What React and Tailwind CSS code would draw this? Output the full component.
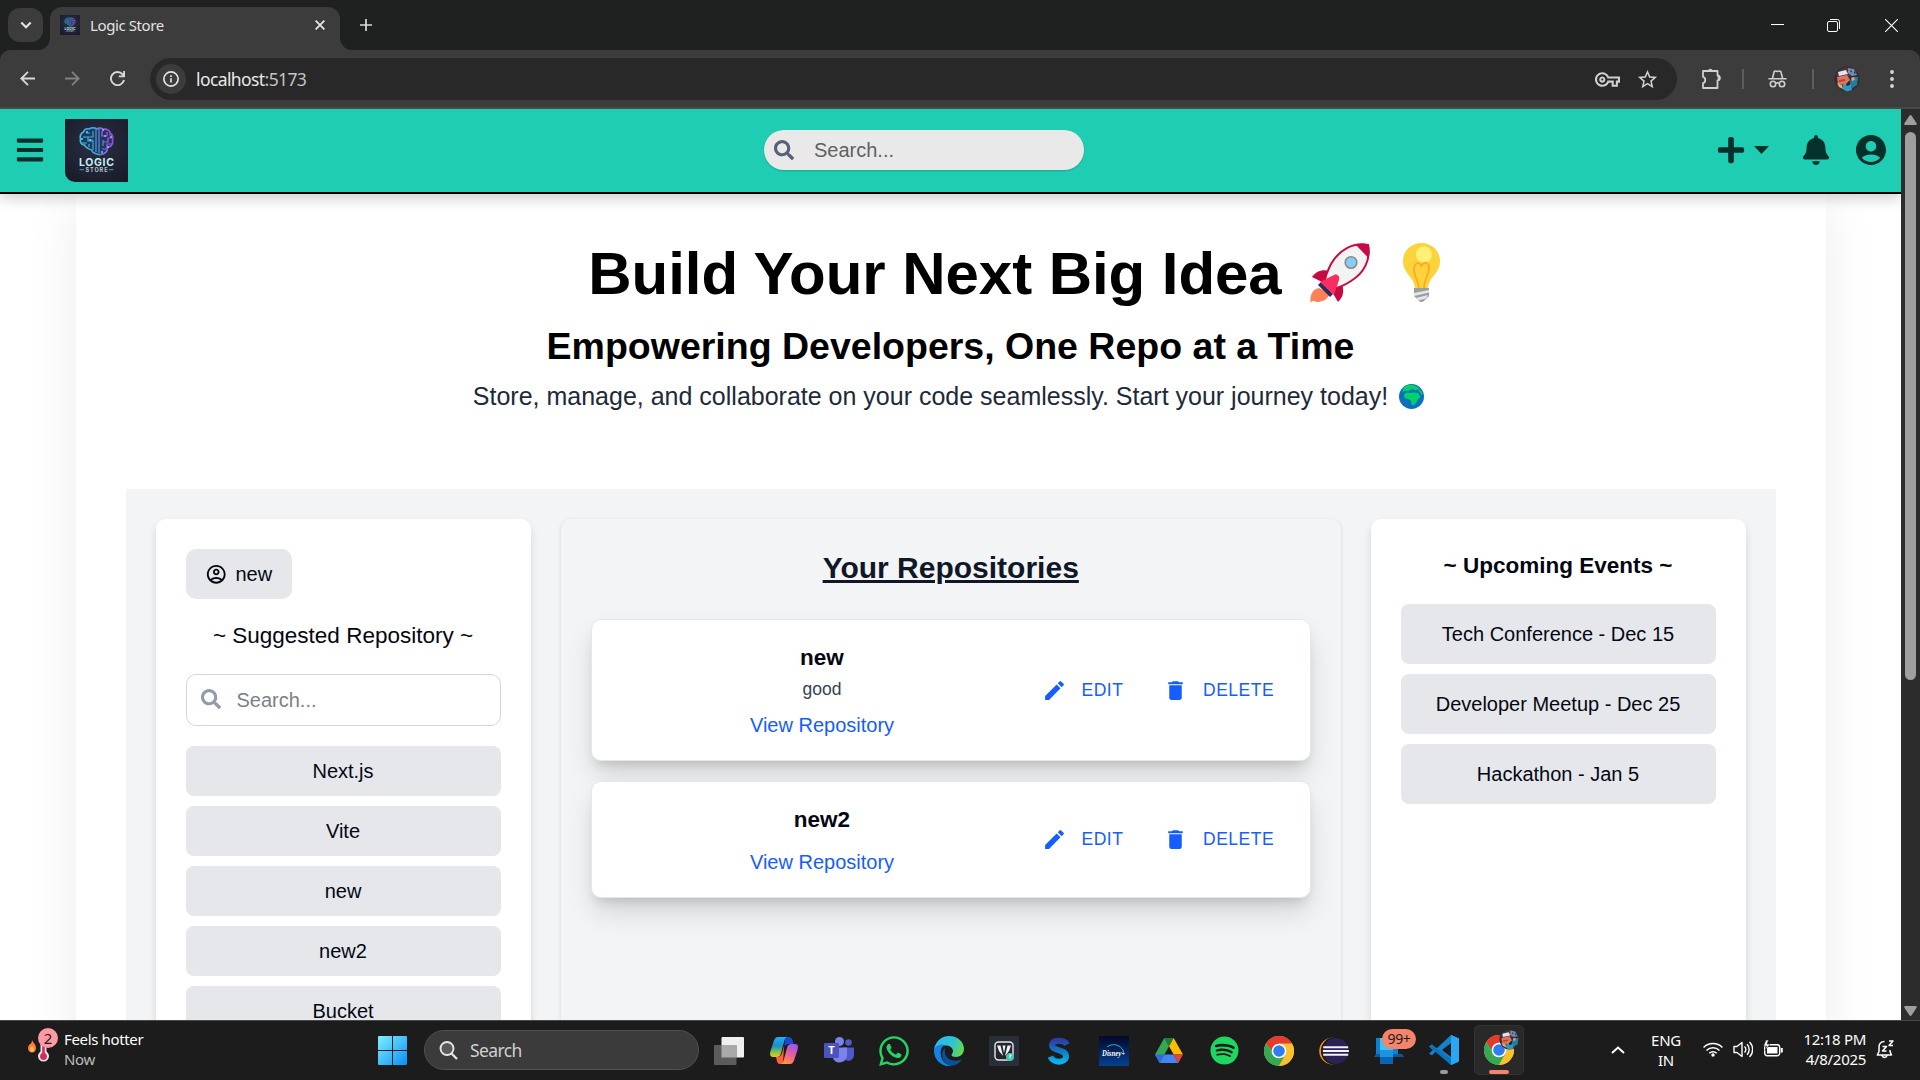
import React from "react";
import { FaBars, FaPlus, FaBell, FaSearch, FaSpotify, FaWhatsapp } from "react-icons/fa";
import { MdEdit, MdDelete, MdOutlineVpnKey, MdStarBorder } from "react-icons/md";

const UI = "font-['Noto_Sans','Open_Sans',sans-serif]";

/* ---------- shared drawings ---------- */

function StoreLogo({ id, className }) {
  return (
    <svg viewBox="0 0 63 63" className={className}>
      <defs>
        <linearGradient id={id + "b"} x1="14" x2="50" y1="22" y2="18" gradientUnits="userSpaceOnUse">
          <stop offset="0" stopColor="#45c4e0" />
          <stop offset="0.5" stopColor="#4a98d8" />
          <stop offset="0.75" stopColor="#b353f0" />
          <stop offset="1" stopColor="#8a4fd0" />
        </linearGradient>
        <radialGradient id={id + "g"} cx="0.5" cy="0.4" r="0.8">
          <stop offset="0" stopColor="#2a3044" />
          <stop offset="1" stopColor="#161826" />
        </radialGradient>
      </defs>
      <rect width="63" height="63" fill={"url(#" + id + "g)"} />
      <path
        d="M32 10c-3-2-7-1-8 0-3-1-5 1-5.500 3-3 1-4 5-3 7-1 3 1 6 4 6 1 3 5 4 7 5 1 3 6 5 9 4.500 4-.5 7-3 7-7 4-1 6-4 5-7 1-3 0-6-2-7-1-4-5-5-7-4-2-2-5-2-6.500-.5z"
        fill="#1b3a5c"
        stroke={"url(#" + id + "b)"}
        strokeWidth="1.6"
      />
      <g fill="none" stroke={"url(#" + id + "b)"} strokeWidth="1.2">
        <path d="M31 10v23M34 10v24M28 12v6h-5M18 18h5v4h5v5M17 24h5M24 28v-3M28 21h-3M21 14h4M37 12v5h5v-4M47 19h-4v4h-5M38 27v-6M42 29v-4h5M37 30h4M44 16h3M28 31v-6" />
      </g>
      <g fill="#5fd8f0">
        <circle cx="22" cy="13" r="1" />
        <circle cx="17" cy="20" r="1" />
        <circle cx="25" cy="21" r="1" />
        <circle cx="37" cy="33" r="1" />
        <circle cx="43" cy="28" r="1" />
      </g>
      <g fill="#e08bff">
        <circle cx="38" cy="11" r="1.1" />
        <circle cx="46" cy="18" r="1.1" />
        <circle cx="40" cy="17" r="1" />
      </g>
      <text x="31.500" y="46.500" textAnchor="middle" fontSize="10.500" fontWeight="700" textLength="35" fill="#c5eef3" fontFamily="Inter, sans-serif">LOGIC</text>
      <text x="31.500" y="52.700" textAnchor="middle" fontSize="5.500" fontWeight="700" textLength="22" fill="#b9c6cf" fontFamily="Inter, sans-serif">STORE</text>
      <path d="M14.500 50.700h4.500M44 50.700h4.500" stroke="#2f8f98" strokeWidth="1.200" />
    </svg>
  );
}

function Avatar({ className }) {
  return (
    <svg viewBox="0 0 26 26" className={className}>
      <circle cx="13" cy="13" r="12.5" fill="#3a2a33" />
      <path d="M2 9c3-5 8-8 13-7l4 5-4 4H4z" fill="#57303a" />
      <path d="M3 11l10-2 3 5-4 5-8-1z" fill="#d9785c" />
      <path d="M4 6l8-2 2 4-9 2z" fill="#dfe6ee" />
      <path d="M14 2l6 1 3 6-5 1-4-3z" fill="#6f8fb8" />
      <path d="M16 4l2 1-1 2zM20 5l2 2-2 1z" fill="#3a2a33" />
      <path d="M18 11l6 0-1 8-5 3-2-6z" fill="#1d7fa3" />
      <path d="M9 19l8-1 1 6-5 1.500-4-2z" fill="#2a9cc4" />
      <path d="M3 17l5 2 1 4-4-2z" fill="#e0b27c" />
      <path d="M17 12l3-1 1 3-3 1z" fill="#e79a7a" />
      <path d="M5 14l6-1v2l-6 1z" fill="#b8432f" />
      <path d="M12 18l3-3 1 4-3 1z" fill="#2b2530" />
    </svg>
  );
}

function ChromeLogo({ className }) {
  return (
    <svg viewBox="0 0 30 30" className={className}>
      <circle cx="15" cy="15" r="15" fill="#fbc02d" />
      <path d="M2 7.500A15 15 0 0 0 15 30l6.500-11.250L15 15l-6.500 3.750z" fill="#34a853" />
      <path d="M15 7.500h13A15 15 0 0 1 15 30l6.500-11.250z" fill="#fbc02d" />
      <path d="M2 7.500L8.500 18.750 15 15 15 7.500z" fill="#34a853" />
      <path d="M2 7.500A15 15 0 0 1 28 7.500H15l-6.500 3.750L8.500 15 2.200 7.300z" fill="#e33b2e" />
      <circle cx="15" cy="15" r="7.300" fill="#fff" />
      <circle cx="15" cy="15" r="5.800" fill="#2f7df0" />
    </svg>
  );
}

/* ---------- browser chrome ---------- */

function TabStrip() {
  return (
    <div className="flex h-[50px] bg-[#1f2120] pl-2">
      <div className="mt-2 flex h-[34px] w-[35px] items-center justify-center rounded-[12px] bg-[#3c3c3c]">
        <svg viewBox="0 0 12 8" className="h-2 w-3" fill="none" stroke="#e3e3e3" strokeWidth="2.200">
          <path d="M1.300 1.500L6 6.200l4.700-4.700" />
        </svg>
      </div>
      <div className="mt-[7px] flex h-[43px] items-start">
        <div className="flex h-[43px] w-[7px] items-end justify-end">
          <svg viewBox="0 0 12 12" className="-ml-3 h-3 w-3 shrink-0">
            <path d="M12 0v12H0A12 12 0 0 0 12 0z" fill="#3c3c3c" />
          </svg>
        </div>
        <div className="flex h-[43px] w-[290px] items-start rounded-t-[12px] bg-[#3c3c3c] pl-[10px] pt-2">
          <StoreLogo id="fav" className="h-5 w-5" />
          <span className={"ml-[10px] h-5 w-[200px] text-[15px] leading-[20px] tracking-[-0.4px] text-[#e3e3e3] " + UI}>Logic Store</span>
          <svg viewBox="0 0 10 10" className="ml-[25px] mt-[5px] h-[10px] w-[10px]" stroke="#e3e3e3" strokeWidth="1.900">
            <path d="M.6.6l8.800 8.800M9.400.6L.6 9.400" />
          </svg>
        </div>
        <div className="flex h-[43px] items-end">
          <svg viewBox="0 0 12 12" className="h-3 w-3">
            <path d="M0 0v12h12A12 12 0 0 1 0 0z" fill="#3c3c3c" />
          </svg>
        </div>
      </div>
      <svg viewBox="0 0 12 12" className="ml-[8px] mt-[19px] h-3 w-3" stroke="#dcdcdc" strokeWidth="1.700">
        <path d="M6 0v12M0 6h12" />
      </svg>
      <div className="ml-auto mr-[22px] flex h-[50px] items-center gap-[44px]">
        <svg viewBox="0 0 13 13" className="h-[13px] w-[13px]" stroke="#fff" strokeWidth="1">
          <path d="M0 5.500h13" />
        </svg>
        <svg viewBox="0 0 13 13" className="-ml-px mr-px h-[13px] w-[13px]" fill="none" stroke="#fff" strokeWidth="1">
          <rect x=".5" y="2.500" width="10" height="10" rx="1.500" />
          <path d="M3 .5h7.500a2 2 0 0 1 2 2V10" />
        </svg>
        <svg viewBox="0 0 13 13" className="h-[13px] w-[13px]" stroke="#fff" strokeWidth="1.100">
          <path d="M0 0l13 13M13 0L0 13" />
        </svg>
      </div>
    </div>
  );
}

function Toolbar() {
  return (
    <div className="bg-[#1f2120]">
      <div className="flex h-[59px] items-start rounded-t-[10px] border-b-2 border-[#4a4a4b] bg-[#3c3c3c] pt-2">
        <div className="flex h-[42px] w-[150px] items-center gap-[30px] pb-px pl-5">
          <svg viewBox="0 0 15 15" className="h-[15px] w-[15px]" fill="none" stroke="#d8d8d8" strokeWidth="1.800">
            <path d="M15 7.500H1.500M8 .8L1.300 7.500 8 14.200" />
          </svg>
          <svg viewBox="0 0 15 15" className="h-[15px] w-[15px]" fill="none" stroke="#808080" strokeWidth="1.800">
            <path d="M0 7.500h13.500M7 .8l6.700 6.700L7 14.200" />
          </svg>
          <svg viewBox="0 0 15 15" className="h-[15px] w-[15px]" fill="none" stroke="#d8d8d8" strokeWidth="1.900">
            <path d="M14 9A6.600 6.600 0 1 1 12.600 3.300L14 5M14.100 0v5.400H8.800" />
          </svg>
        </div>
        <div className="flex h-[42px] w-[1527px] items-center rounded-full bg-[#282828] pl-[6px]">
          <div className="flex h-[30px] w-[30px] items-center justify-center rounded-full bg-[#3c3c3c]">
            <svg viewBox="0 0 16 16" className="h-4 w-4" fill="none" stroke="#e3e3e3" strokeWidth="1.700">
              <circle cx="8" cy="8" r="7.100" />
              <path d="M8 7.200v4.300M8 4.200v1.700" />
            </svg>
          </div>
          <span className={"ml-[10px] text-[17.5px] leading-[24px] tracking-[-0.6px] text-[#e8e8e8] " + UI}>
            localhost<span className="text-[#c4c4c4]">:5173</span>
          </span>
          <MdOutlineVpnKey size={25} color="#d0d0d0" className="ml-auto" />
          <MdStarBorder size={23} color="#d0d0d0" className="ml-[16px] mr-[18px]" />
        </div>
        <div className="flex h-[42px] flex-1 items-center pl-[24px]">
          <svg viewBox="0 0 21 21" className="-mt-px h-[21px] w-[21px]" fill="none" stroke="#d0d0d0" strokeWidth="1.800" strokeLinejoin="round">
            <path d="M2 3h14.500v4.500c3.200.3 3.200 4.700 0 5V20H2v-4.800c3-.8 3-5.600 0-6.400z" />
            <path d="M7 2.500a2.600 2.600 0 0 1 4.600 0zM17 7.800a2.600 2.600 0 0 1 0 4.500z" fill="#d0d0d0" strokeWidth="0.500" />
          </svg>
          <div className="ml-[20px] h-5 w-[2px] bg-[#5e5e5e]" />
          <svg viewBox="0 0 19 18" className="ml-[24px] h-[18px] w-[19px]" fill="none" stroke="#d0d0d0" strokeWidth="1.600">
            <path d="M4.500 8L6.200 1.500C8 .4 8.500 1.500 9.500 1.500s1.500-1.100 3.300 0L14.500 8M.5 8.800h18" />
            <circle cx="5" cy="14" r="2.700" />
            <circle cx="14" cy="14" r="2.700" />
            <path d="M7.700 13.500c1-.8 2.600-.8 3.600 0" />
          </svg>
          <div className="ml-[25px] h-5 w-[2px] bg-[#5e5e5e]" />
          <Avatar className="ml-[20px] h-[26px] w-[26px]" />
          <svg viewBox="0 0 4 19" className="ml-[30px] h-[19px] w-1" fill="#d8d8d8">
            <circle cx="2" cy="2" r="1.900" />
            <circle cx="2" cy="9" r="1.900" />
            <circle cx="2" cy="16" r="1.900" />
          </svg>
        </div>
      </div>
    </div>
  );
}

/* ---------- web page ---------- */

function Navbar() {
  return (
    <header className="relative z-10 flex h-[85px] items-center border-b-2 border-black bg-[#1fceb2] pb-[2px] text-[#05302b] shadow-[0_4px_14px_rgba(0,0,0,0.2)]">
      <FaBars size={30} className="ml-[15px]" />
      <StoreLogo id="nav" className="ml-5 mt-[2px] h-[63px] w-[63px] rounded-bl-[10px]" />
      <div className="ml-[636px] flex h-10 w-[320px] items-center rounded-full bg-[#e9e9e9] pl-[10px] shadow-[0_1px_2px_rgba(0,0,0,0.2)]">
        <FaSearch size={20} color="#566079" />
        <span className="ml-[20px] text-[20px] leading-[30px] text-[#5f6163]">Search...</span>
      </div>
      <FaPlus size={30} className="ml-[632px]" />
      <svg viewBox="0 0 15 8" className="ml-[8px] h-2 w-[15px]" fill="currentColor">
        <path d="M0 0h15L7.500 8z" />
      </svg>
      <FaBell size={30} className="ml-[32px]" />
      <svg viewBox="0 0 24 24" className="ml-[22px] h-[36px] w-[36px]" fill="currentColor">
        <path d="M12 2C6.480 2 2 6.480 2 12s4.480 10 10 10 10-4.480 10-10S17.520 2 12 2m0 4c1.930 0 3.500 1.570 3.500 3.500S13.930 13 12 13s-3.500-1.570-3.500-3.500S10.070 6 12 6m0 14c-2.030 0-4.430-.82-6.140-2.880C7.550 15.800 9.680 15 12 15s4.450.8 6.140 2.120C16.430 19.180 14.030 20 12 20" />
      </svg>
    </header>
  );
}

function Rocket() {
  return (
    <svg viewBox="0 0 60 60" className="h-[60px] w-[60px]">
      <path d="M9 45C2 46 0 53 .5 59.500c3-2.500 4-1 6-.5 5 0 12-2 13-9z" fill="#ff8157" />
      <path d="M20 28C11 26 6 29 2 34l12 6zM32 41c3 9 0 14-4 18l-7-12z" fill="#c80a42" />
      <path d="M58 2C43-1 29 7 21 21c-3 6-6 12-6 17l7 8c6-1 13-4 19-8C54 30 61 17 58 2z" fill="#f3f3f3" stroke="#c80a42" strokeWidth="2" />
      <path d="M58.700 1.300C55 .2 50 .6 46 2l12.500 13c1.300-4 1.400-9 .2-13.700z" fill="#c80a42" />
      <path d="M8 42l12 12 3-3L11 39z" fill="#2b2b5f" />
      <path d="M10 39l14-7c3-1.500 6 1 5 5l-5 15z" fill="#fb2c60" />
      <circle cx="41" cy="19.500" r="5.800" fill="#82cfff" stroke="#8e8a86" strokeWidth="1.600" />
    </svg>
  );
}

function Bulb() {
  return (
    <svg viewBox="0 0 37 60" className="h-[60px] w-[37px]">
      <path d="M18.500 0C8 0 0 8 0 18c0 13 11 15 12 27h13c1-12 12-14 12-27C37 8 29 0 18.500 0z" fill="#fdd33c" />
      <circle cx="21" cy="11.500" r="8" fill="#fff176" />
      <path d="M16 45c-1-8-5-12-5-18 0-7 4-8 6-6l1.500 2 1.500-2c3-3 7 0 6 6-1 6-5 10-5 18" fill="none" stroke="#ffa726" strokeWidth="1.700" />
      <path d="M11 45h15v8l-4 4c-2 2.500-5 2.500-7 0l-4-4z" fill="#9b9ea1" />
      <path d="M11 50l15-3v2.500L11 53zM13 55l12-3-2 3.500-8 2z" fill="#e4e6e8" />
    </svg>
  );
}

function Globe() {
  return (
    <svg viewBox="0 0 25 25" className="h-[25px] w-[25px]">
      <circle cx="12.500" cy="12.500" r="12.500" fill="#0b6fbf" />
      <path d="M5 3l5-2.500 4 .5 5 2 2 2.500-3 0-2 1-2-1.500-3 1-2 1.500-2-1-3 1-1 1z" fill="#00d26a" />
      <path d="M5 10l3-1.500 3 .5 4-.5 4 .5 2.500 4-2.500 2-2 4-2.500 2.500-2-1-.5-4-3-1.500-3.500-1z" fill="#00d26a" />
      <path d="M19 5.500l3 1 2 4-1.500 0-2.500-3z" fill="#00d26a" />
    </svg>
  );
}

function Hero() {
  return (
    <section className="flex flex-col items-center pt-[50px] text-black">
      <h1 className="ml-[127px] flex h-[60px] items-start text-[60px] font-bold leading-[60px]">
        <span className="tracking-[-0.05px]">Build Your Next Big Idea</span>
        <span className="-mt-px ml-[28px]"><Rocket /></span>
        <span className="-mt-px ml-[33px]"><Bulb /></span>
      </h1>
      <h2 className="mt-[20px] text-[37.5px] font-bold leading-[45px]">Empowering Developers, One Repo at a Time</h2>
      <p className="-ml-[4px] mt-[10px] flex items-center text-[25px] leading-[35px] text-[#1e2939]">
        Store, manage, and collaborate on your code seamlessly. Start your journey today!
        <span className="ml-[11px] flex"><Globe /></span>
      </p>
    </section>
  );
}

const suggested = ["Next.js", "Vite", "new", "new2", "Bucket"];
const events = ["Tech Conference - Dec 15", "Developer Meetup - Dec 25", "Hackathon - Jan 5"];
const repos = [{ name: "new", description: "good" }, { name: "new2" }];

function SuggestedPanel() {
  return (
    <aside className="w-[375px] shrink-0 rounded-[10px] bg-white p-[30px] shadow-[0_5px_8px_rgba(0,0,0,0.12)]">
      <div className="flex h-[50px] w-[106px] items-center rounded-[10px] bg-[#e5e7eb] pl-[19px] text-[20px]">
        <svg viewBox="0 0 24 24" className="h-[22.5px] w-[22.5px]" fill="currentColor">
          <path d="M12 2C6.480 2 2 6.480 2 12s4.480 10 10 10 10-4.480 10-10S17.520 2 12 2M7.350 18.500C8.660 17.560 10.260 17 12 17s3.340.56 4.650 1.500c-1.310.94-2.910 1.500-4.650 1.500s-3.340-.56-4.650-1.500m10.790-1.380C16.450 15.800 14.320 15 12 15s-4.450.8-6.140 2.120C4.700 15.730 4 13.950 4 12c0-4.420 3.580-8 8-8s8 3.580 8 8c0 1.950-.7 3.730-1.860 5.120M12 6c-1.930 0-3.500 1.570-3.500 3.500S10.070 13 12 13s3.500-1.570 3.500-3.500S13.930 6 12 6m0 5c-.83 0-1.500-.67-1.500-1.500S11.170 8 12 8s1.500.67 1.500 1.500S12.830 11 12 11" />
        </svg>
        <span className="ml-[8.5px]">new</span>
      </div>
      <h3 className="mb-[21px] mt-[19px] text-center text-[22.5px] leading-[35px]">~ Suggested Repository ~</h3>
      <div className="flex h-[52px] items-center rounded-[10px] border border-[#d1d5dc] pl-[14px]">
        <FaSearch size={20} color="#929baa" className="-mt-[2px]" />
        <span className="ml-4 text-[20px] text-[#7d8087]">Search...</span>
      </div>
      <ul className="mt-5 flex flex-col gap-[10px]">
        {suggested.map((name) => (
          <li key={name} className="flex h-[50px] items-center justify-center rounded-[8px] bg-[#e5e7eb] text-[20px]">{name}</li>
        ))}
      </ul>
    </aside>
  );
}

function RepoCard({ name, description }) {
  return (
    <article className="flex items-center rounded-[10px] border border-[#e5e7eb] bg-white px-5 pb-5 pt-5 shadow-[0_16px_28px_-2px_rgba(0,0,0,0.13),0_8px_12px_-5px_rgba(0,0,0,0.14)]">
      <div className="flex w-[420px] flex-col items-center">
        <h4 className="text-[22.5px] font-bold leading-[35px]">{name}</h4>
        {description && <p className="-mb-[2px] mt-[2px] text-[17.5px] leading-[25px] text-[#364153]">{description}</p>}
        <a className="mt-[10px] text-[20px] leading-[30px] text-[#155dfc]">View Repository</a>
      </div>
      <div className="flex items-center pl-[10px] text-[17.5px] leading-[25px] tracking-[0.5px] text-[#155dfc]">
        <MdEdit size={25} />
        <span className="ml-[14.5px] w-[43px]">EDIT</span>
        <MdDelete size={25} className="ml-[38.5px]" />
        <span className="ml-[15px]">DELETE</span>
      </div>
    </article>
  );
}

function RepositoriesPanel() {
  return (
    <section className="w-[780px] shrink-0 rounded-[10px] bg-[#f3f4f6] pl-[30.5px] pr-[30px] pt-[29px] shadow-[0_1px_4px_rgba(0,0,0,0.12)]">
      <h3 className="text-center text-[30px] font-bold leading-[40px] text-[#101828] underline">Your Repositories</h3>
      <div className="mt-[31px] flex flex-col gap-[20px]">
        {repos.map((repo) => (
          <RepoCard key={repo.name} {...repo} />
        ))}
      </div>
    </section>
  );
}

function EventsPanel() {
  return (
    <aside className="w-[375px] shrink-0 rounded-[10px] bg-white p-[30px] shadow-[0_5px_8px_rgba(0,0,0,0.12)]">
      <h3 className="text-center text-[22.5px] font-bold leading-[34px]">~ Upcoming Events ~</h3>
      <ul className="mt-[21px] flex flex-col gap-[10px]">
        {events.map((event) => (
          <li key={event} className="flex h-[60px] items-center justify-center rounded-[8px] bg-[#e5e7eb] text-[20px]">{event}</li>
        ))}
      </ul>
    </aside>
  );
}

function ScrollBar() {
  return (
    <div className="flex w-[19px] shrink-0 flex-col items-center bg-[#2c2c2c] pt-[6px]">
      <svg viewBox="0 0 13 10" className="h-[10px] w-[13px]" fill="#9f9f9f">
        <path d="M5.400.8q1.100-1.400 2.200 0l5 7.500q.6 1.700-1 1.700H1.400q-1.600 0-1-1.700z" />
      </svg>
      <div className="mt-[7px] h-[548px] w-[11px] rounded-full bg-[#9f9f9f]" />
      <svg viewBox="0 0 13 10" className="mb-[4px] mt-auto h-[10px] w-[13px]" fill="#9f9f9f">
        <path d="M5.400 9.200q1.100 1.400 2.200 0l5-7.500Q13.200 0 11.600 0H1.400Q-.2 0 .4 1.700z" />
      </svg>
    </div>
  );
}

function Page() {
  return (
    <div className="flex h-[911px] overflow-hidden">
      <div className="h-[911px] w-[1901px] shrink-0 overflow-hidden bg-white font-['Liberation_Sans',Arial,sans-serif] text-[#030712]">
        <Navbar />
        <main className="mx-auto h-[1200px] w-[1750px] bg-white px-[50px] shadow-[0_12px_48px_rgba(0,0,0,0.08)]">
          <Hero />
          <div className="mt-[75px] flex h-[800px] gap-[30px] bg-[#f3f4f6] px-[30px] pt-[30px]">
            <SuggestedPanel />
            <RepositoriesPanel />
            <EventsPanel />
          </div>
        </main>
      </div>
      <ScrollBar />
    </div>
  );
}

/* ---------- taskbar ---------- */

function Slot({ children }) {
  return <div className="flex h-[59px] w-[55px] shrink-0 items-center justify-center">{children}</div>;
}

function TaskApps() {
  return (
    <div className="flex">
      <Slot>
        <svg viewBox="0 0 30 28" className="h-[28px] w-[30px]">
          <rect x="7.500" width="22.500" height="20.500" rx="1" fill="#efefef" />
          <rect y="8" width="22.500" height="20" rx="1" fill="#5c5c5c" />
          <rect x="7.500" y="8" width="15" height="12.500" fill="#a9a9a9" />
        </svg>
      </Slot>
      <Slot>
        <svg viewBox="0 0 28 27" className="h-[27px] w-[28px]">
          <defs>
            <linearGradient id="cpA" x1="0" x2="0" y1="0" y2="1">
              <stop offset="0" stopColor="#1fb0f2" />
              <stop offset="0.45" stopColor="#1c8fc9" />
              <stop offset="0.75" stopColor="#7cc44a" />
              <stop offset="1" stopColor="#f5c718" />
            </linearGradient>
            <linearGradient id="cpB" x1="0.6" x2="0.2" y1="0" y2="1">
              <stop offset="0" stopColor="#a355e8" />
              <stop offset="0.5" stopColor="#ef5f93" />
              <stop offset="1" stopColor="#ff9a3c" />
            </linearGradient>
          </defs>
          <path d="M15 0h4c2 0 3 1.500 3.500 3l1 4h-5c-2.500 0-3.500 1.500-4 3z" fill="#1c49d4" />
          <path d="M8 0h9c-2 1-2.500 2.500-3 5l-3 11c-1 3-2 4-4.500 4H3c-3 0-3.500-2.500-2.500-6L4 3.500C5 1 6 0 8 0z" fill="url(#cpA)" />
          <path d="M7 20c3 0 4-1.500 5-4l2-7-1 18H10c-2 0-2.500-1-3-2.500L6 20z" fill="#ff5f3c" />
          <path d="M20 27h-9c2-1 2.500-2.500 3-5l3-11c1-3 2-4 4.500-4H25c3 0 3.500 2.500 2.500 6L24 23.500c-1 2.500-2 3.500-4 3.500z" fill="url(#cpB)" />
        </svg>
      </Slot>
      <Slot>
        <svg viewBox="0 0 30 27" className="h-[27px] w-[30px]">
          <circle cx="24.500" cy="5.500" r="3.300" fill="#5059c9" />
          <circle cx="15.500" cy="4.500" r="4.500" fill="#7b83eb" />
          <path d="M19 10.500h11v7.500a5.500 5.500 0 0 1-9 4.500z" fill="#5059c9" />
          <path d="M9 10.500h14V19a7.500 7.500 0 0 1-14 2.500z" fill="#7b83eb" />
          <rect y="6" width="15" height="15" rx="1.200" fill="#4b53bc" />
          <text x="7.500" y="17.200" textAnchor="middle" fontSize="11" fontWeight="700" fill="#fff" fontFamily="Open Sans, sans-serif">T</text>
        </svg>
      </Slot>
      <Slot><FaWhatsapp size={34} color="#25d366" /></Slot>
      <Slot>
        <svg viewBox="0 0 30 30" className="h-[30px] w-[30px]">
          <defs>
            <linearGradient id="edA" x1="0" x2="1" y1="0.2" y2="0.5">
              <stop offset="0" stopColor="#2fb4f0" />
              <stop offset="0.6" stopColor="#2cc4d6" />
              <stop offset="1" stopColor="#66d94a" />
            </linearGradient>
          </defs>
          <path d="M0 14C1 6 7 0 15 0c9 0 15 6 15 13 0 5-4 8-8 8-3 0-4.500-1-4.500-2 0-1 1.500-1.500 1.500-4 0-3-3-5.500-7-5.500C6 9.500 1 12 0 14z" fill="url(#edA)" />
          <path d="M0 14c1-3 5-6 11-5-3 1-4.500 5-4.500 8C6.500 24 11 29 17 29.800 8 31 0 24 0 14z" fill="#0f6fd0" />
          <path d="M11 12c-4 3-5 15 6 17.800 5 0 9-3 11-6.500-7 3.500-19 1-17-11.300z" fill="#0c509a" />
          <path d="M0 14c2-4 6-5 10-4.500C7 11 6 14 6.500 18 7 25 12 29 17 29.800 8 31 0 24 0 14z" fill="#1583e0" />
        </svg>
      </Slot>
      <Slot>
        <svg viewBox="0 0 30 30" className="h-[30px] w-[30px]">
          <rect width="30" height="30" fill="#2a2d3a" />
          <rect x="6" y="6" width="18" height="18" rx="3.500" fill="#24262f" stroke="#e8e8e8" strokeWidth="1.400" />
          <path d="M8 9.500L11.500 9.500 14 20 10 15zM22 9.500L18.500 9.500 16 20 20 15zM13.500 9.500h3L15 17z" fill="#f5f5f5" />
          <circle cx="21" cy="21" r="4" fill="#3fc6b4" />
          <path d="M21 18.500v4M21 18.500l1.700.8" stroke="#fff" strokeWidth="1" />
        </svg>
      </Slot>
      <Slot>
        <svg viewBox="0 0 22 30" className="h-[30px] w-[22px]">
          <defs>
            <linearGradient id="sG" x1="0" x2="0" y1="0" y2="1">
              <stop offset="0" stopColor="#2b3fa8" />
              <stop offset="0.6" stopColor="#0a86cc" />
              <stop offset="1" stopColor="#0cb0e8" />
            </linearGradient>
          </defs>
          <path d="M19 8.500C16.500 3.500 4.500 3 4 9c-.5 6 14 4 14 11 0 7.500-13 7.500-15.500.5" fill="none" stroke="url(#sG)" strokeWidth="6" />
        </svg>
      </Slot>
      <Slot>
        <svg viewBox="0 0 30 30" className="h-[30px] w-[30px]">
          <defs>
            <linearGradient id="dG" x1="0" x2="0" y1="0" y2="1">
              <stop offset="0" stopColor="#04082b" />
              <stop offset="1" stopColor="#04408f" />
            </linearGradient>
          </defs>
          <rect width="30" height="30" fill="url(#dG)" />
          <path d="M8 11C13 7 21 8 24.500 15" fill="none" stroke="#35c3e0" strokeWidth="0.900" />
          <text x="14.500" y="19.500" textAnchor="middle" fontSize="8" fontWeight="700" fontStyle="italic" textLength="23" lengthAdjust="spacingAndGlyphs" fill="#fff" fontFamily="Liberation Serif, serif">Disney+</text>
        </svg>
      </Slot>
      <Slot>
        <svg viewBox="0 0 28 25" className="h-[25px] w-[28px]">
          <path d="M9.300 0h9.400L14 8.300z" fill="#188038" />
          <path d="M9.300 0L0 16.500 4.700 25 14 8.300z" fill="#34a853" />
          <path d="M18.700 0L28 16.500h-9.300L14 8.300z" fill="#fbbc04" />
          <path d="M4.700 25l4.600-8.500h9.400L23.300 25z" fill="#4285f4" />
          <path d="M18.700 16.500H28L23.300 25z" fill="#ea4335" />
          <path d="M0 16.500h9.300L4.700 25z" fill="#2f6bdc" />
        </svg>
      </Slot>
      <Slot><FaSpotify size={29} color="#1ed760" /></Slot>
      <Slot><ChromeLogo className="h-[30px] w-[30px]" /></Slot>
      <Slot>
        <svg viewBox="0 0 30 28" className="h-[28px] w-[30px]">
          <circle cx="13.800" cy="14" r="13.600" fill="#f7941e" />
          <circle cx="15.800" cy="14" r="13.900" fill="#1c1c1c" />
          <circle cx="16.800" cy="14" r="12.900" fill="#2c2255" />
          <path d="M4.200 10.300h25M3.900 14h26M4.200 17.700h25" stroke="#f2f2f7" strokeWidth="2" />
        </svg>
      </Slot>
      <Slot>
        <div className="relative">
          <svg viewBox="0 0 30 27" className="h-[27px] w-[30px]">
            <path d="M2 1h22v19H2z" fill="#0f7fd2" />
            <path d="M6 1h13v12H6z" fill="#41c3ee" />
            <path d="M0 20h30l-2-3H2z" fill="#0a5a9c" />
            <path d="M6 13h13v14H6z" fill="#0a64b4" />
            <path d="M6 13h13v7H6z" fill="#1a94e0" />
          </svg>
          <span className={"absolute -top-[8px] left-[8px] flex h-5 w-[34px] items-center justify-center rounded-full bg-[#f4846b] text-[14px] leading-none tracking-[-0.3px] text-[#1c1c1c] " + UI}>99+</span>
        </div>
      </Slot>
      <div className="flex h-[59px] w-[55px] shrink-0 flex-col items-center pt-[14px]">
        <svg viewBox="0 0 30 30" className="h-[30px] w-[30px]">
          <path d="M22 0l8 3.500v23L22 30 7 16l-4 4.500-3-2L4 15 0 11.500l3-2L7 14z" fill="#1383cf" />
          <path d="M22 8v14l-9-7z" fill="#1c1c1c" />
          <path d="M22 0l8 3.500v23L22 30z" fill="#2aa6f2" />
          <path d="M0 11.500l3-2L22 24v6z" fill="#0b74bd" />
        </svg>
        <div className="mt-[5px] h-1 w-2 rounded-full bg-[#9a9a9a]" />
      </div>
      <div className="ml-[2.5px] mt-1 flex h-[50px] w-[50px] flex-col items-center rounded-[5px] border border-[#323232] bg-[#292929] pt-[9px]">
        <div className="relative h-[30px] w-[30px]">
          <ChromeLogo className="h-[30px] w-[30px]" />
          <Avatar className="absolute -top-[6px] left-[15px] h-[21px] w-[21px]" />
        </div>
        <div className="mt-[5px] h-1 w-5 rounded-full bg-[#f4846b]" />
      </div>
    </div>
  );
}

function Taskbar() {
  return (
    <div className={"flex h-[60px] border-t border-[#474a49] bg-[#1c1c1c] " + UI}>
      <div className="flex w-[378px] shrink-0">
        <div className="relative ml-[27px] mt-[7px] h-[36px] w-[32px]">
          <svg viewBox="0 0 32 36" className="h-[36px] w-[32px]">
            <path d="M5 12c1 3 4 4 4 8 0 3-2 4.500-4 4.500S1 23 1 20c0-2 1-3 2-4 1 0 2-2 2-4z" fill="#ff7a3c" />
            <path d="M5 18c1 1 2 2 2 3.500S6 24 5 24s-2-1-2-2.500S4 19 5 18z" fill="#ffc34d" />
            <path d="M13.500 10a3 3 0 0 1 6 0v13.500a5.500 5.500 0 1 1-6 0z" fill="#d6e6f5" />
            <path d="M16.500 16v12" stroke="#e0284f" strokeWidth="2.600" />
            <circle cx="16.500" cy="28.500" r="3.400" fill="#e0284f" />
          </svg>
          <span className="absolute left-[11px] top-0 flex h-5 w-5 items-center justify-center rounded-full bg-[#ff99a4] text-[15px] leading-none text-[#1c1c1c]">2</span>
        </div>
        <div className="ml-[5px] mt-[8px] text-[15px] leading-[20px] tracking-[-0.35px] text-white">
          <div>Feels hotter</div>
          <div className="text-[#bdbdbd]">Now</div>
        </div>
      </div>
      <svg viewBox="0 0 29 29" className="mt-[15px] h-[29px] w-[29px] shrink-0">
        <defs>
          <linearGradient id="winG" x1="0" y1="0" x2="1" y2="1">
            <stop offset="0" stopColor="#7df0fd" />
            <stop offset="1" stopColor="#0a8ff5" />
          </linearGradient>
        </defs>
        <path d="M1 0h13v14H0V1q0-1 1-1zM15 0h13q1 0 1 1v13H15zM0 15h14v14H1q-1 0-1-1zM15 15h14v13q0 1-1 1H15z" fill="url(#winG)" />
      </svg>
      <div className="ml-[17px] mr-[2.5px] mt-[9px] flex h-[40px] w-[275px] shrink-0 items-center rounded-full border border-[#505050] bg-[#3b3b3b] pl-[14px]">
        <svg viewBox="0 0 19 19" className="h-[19px] w-[19px]" fill="none" stroke="#e6e6e6" strokeWidth="1.900">
          <circle cx="8" cy="7.500" r="6.500" fill="#595959" />
          <path d="M12.500 12.500L18 18" strokeWidth="2.300" />
        </svg>
        <span className="ml-[12px] text-[17.5px] leading-[24px] tracking-[-0.6px] text-[#cfcfcf]">Search</span>
      </div>
      <TaskApps />
      <div className="ml-auto mr-[26px] flex h-[57px] items-center text-[15px] leading-[20px] text-white">
        <svg viewBox="0 0 14 8" className="h-2 w-[14px]" fill="none" stroke="#fff" strokeWidth="2">
          <path d="M1 7l6-5.500L13 7" />
        </svg>
        <div className="ml-[23px] w-[36px] text-center tracking-[-0.3px]">
          <div>ENG</div>
          <div>IN</div>
        </div>
        <svg viewBox="0 0 20 15" className="ml-[19px] h-[15px] w-5" fill="none" stroke="#fff" strokeWidth="1.500">
          <path d="M.6 5.500a13.300 13.300 0 0 1 18.800 0M3.500 8.500a9.200 9.200 0 0 1 13 0M6.300 11.300a5.200 5.200 0 0 1 7.400 0" />
          <circle cx="10" cy="13" r="1.700" fill="#fff" stroke="none" />
        </svg>
        <svg viewBox="0 0 20 17" className="ml-[10px] h-[17px] w-5" fill="none" stroke="#fff" strokeWidth="1.400" strokeLinejoin="round">
          <path d="M1 5.500h3L9 1.500v14l-5-4H1z" />
          <path d="M11.500 5.500a4 4 0 0 1 0 6M14 3.300a7.300 7.300 0 0 1 0 10.400M16.500 1a10.500 10.500 0 0 1 0 15" />
        </svg>
        <svg viewBox="0 0 20 17" className="-mt-[2px] ml-[10px] h-[17px] w-5" fill="none" stroke="#fff" strokeWidth="1.400">
          <rect x="1.700" y="4.700" width="15" height="11" rx="2.500" />
          <rect x="4" y="7" width="10.500" height="6.500" fill="#fff" stroke="none" />
          <path d="M18.800 8v4.500" strokeWidth="2" />
          <path d="M3 0L.5 6h3L2 10.500 7 4H4.200L5.500 0z" fill="#fff" stroke="#1c1c1c" strokeWidth="0.600" />
        </svg>
        <div className="-mt-px ml-[15px] w-[68px] text-right tracking-[-0.3px]">
          <div>12:18 PM</div>
          <div>4/8/2025</div>
        </div>
        <svg viewBox="0 0 18 19" className="ml-[10px] h-[19px] w-[18px]" fill="none" stroke="#fff" strokeWidth="1.500" strokeLinejoin="round">
          <path d="M8.500 1.500C5 1.500 3 4 3 7v4.500L1.300 15h14.200L14 11.500V10M6 15.500a2.600 2.600 0 0 0 5 0" />
          <path d="M6.500 6.500h4l-4 4.500h4M13 1h4l-4 4.500h4" />
        </svg>
      </div>
    </div>
  );
}

export default function App() {
  return (
    <div className="h-[1080px] w-[1920px] overflow-hidden bg-[#1c1c1c]">
      <TabStrip />
      <Toolbar />
      <Page />
      <Taskbar />
    </div>
  );
}
